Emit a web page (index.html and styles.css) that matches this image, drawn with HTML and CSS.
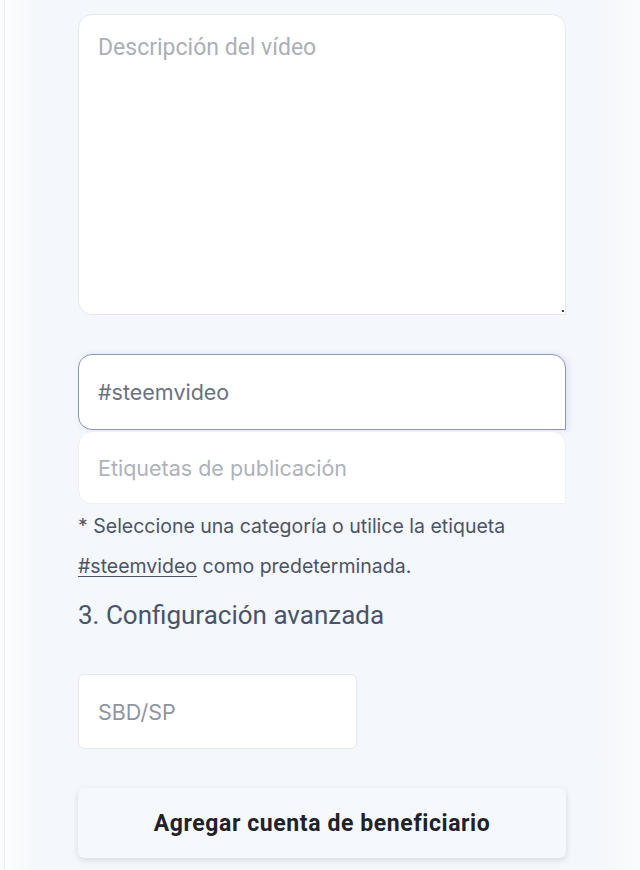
FILE: index.html
```html
<!DOCTYPE html>
<html lang="es">
<head>
    <meta charset="UTF-8">
    <meta name="viewport" content="width=device-width, initial-scale=1.0">
    <title>Subir vídeo</title>
    <link rel="stylesheet" href="styles.css">
</head>
<body>
    <div class="page">
        <form class="upload-form">
            <div class="textarea-wrap">
                <textarea class="description" placeholder="Descripción del vídeo"></textarea>
            </div>

            <div class="tags">
                <input class="field field-active" type="text" value="#steemvideo">
                <input class="field" type="text" placeholder="Etiquetas de publicación">
            </div>

            <p class="note">
                * Seleccione una categoría o utilice la etiqueta<br>
                <a href="#">#steemvideo</a> como predeterminada.
            </p>

            <h2 class="section-title">3. Configuración avanzada</h2>

            <input class="field field-small" type="text" placeholder="SBD/SP">

            <button type="button" class="btn-beneficiary">Agregar cuenta de beneficiario</button>
        </form>
    </div>
</body>
</html>
```

FILE: styles.css
```css
html {
    background-color: #fafbfc;
}

body {
    margin: 0;
    font-family: 'Inter', 'Roboto', sans-serif;
}

.page {
    min-height: 870px;
    margin-left: 4px;
    border-left: 1px solid #e8ebef;
    padding: 14px 0 0 73px;
    box-sizing: border-box;
    background: linear-gradient(to right, #fdfdfe 0, #f4f7fb 32px, #f4f7fb 592px, #fafbfc 635px);
}

.upload-form {
    width: 488px;
    display: flex;
    flex-direction: column;
}

.textarea-wrap {
    position: relative;
}

/* little resize grip in the corner */
.textarea-wrap::after {
    content: '';
    position: absolute;
    right: 2px;
    bottom: 3px;
    width: 2px;
    height: 2px;
    background-color: #444;
}

.description {
    display: block;
    width: 100%;
    height: 301px;
    box-sizing: border-box;
    padding: 19px 19px;
    border: 1px solid #e5e8ee;
    border-radius: 14px 14px 0 14px;
    background-color: white;
    font-family: 'Roboto', sans-serif;
    font-size: 23px;
    color: #333;
    resize: none;
    outline: none;
}

.description::placeholder {
    color: #abafb7;
}

.tags {
    display: flex;
    flex-direction: column;
    gap: 1px;
    margin-top: 39px;
}

.field {
    display: block;
    width: 100%;
    height: 73px;
    box-sizing: border-box;
    padding: 0 19px;
    border: 1px solid #eef0f3;
    border-radius: 14px 14px 0 14px;
    background-color: white;
    font-family: 'Inter', sans-serif;
    font-size: 21.5px;
    color: #6b7180;
    outline: none;
}

.field::placeholder {
    color: #aeb2ba;
}

.field-active {
    height: 76px;
    border-color: #8d97b6;
    box-shadow: 2px 0 6px rgba(110, 130, 210, 0.18);
}

.note {
    margin: 2px 0 0;
    font-size: 19.5px;
    line-height: 40px;
    color: #4b5367;
}

.note a {
    color: #4b5367;
    text-decoration: underline;
    text-underline-offset: 3px;
}

.section-title {
    margin: 11px 0 0;
    font-family: 'Roboto', sans-serif;
    font-size: 26px;
    font-weight: normal;
    line-height: 36px;
    color: #4a5468;
}

.field-small {
    width: 279px;
    height: 75px;
    margin-top: 41px;
    border: 1px solid #e6e8ec;
    border-radius: 6px;
}

.field-small::placeholder {
    color: #8f959f;
}

.btn-beneficiary {
    height: 70px;
    margin-top: 39px;
    border: none;
    border-radius: 6px;
    background-color: #f5f8fc;
    box-shadow: 0 2px 6px rgba(0, 0, 0, 0.13);
    font-family: 'Roboto', sans-serif;
    font-size: 23px;
    font-weight: bold;
    letter-spacing: 0.6px;
    color: #1f2328;
    cursor: pointer;
}
```
